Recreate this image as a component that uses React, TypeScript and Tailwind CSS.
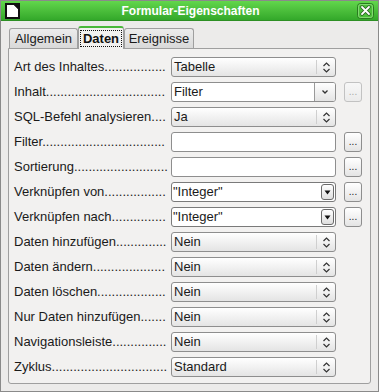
import React, { useMemo } from 'react';

const font = { fontFamily: '"Liberation Sans", Arial, sans-serif' };

type Kind = 'list' | 'combo' | 'text' | 'field';

const rows: { label: string; kind: Kind; value?: string; button?: 'on' | 'off' }[] = [
  { label: 'Art des Inhaltes', kind: 'list', value: 'Tabelle' },
  { label: 'Inhalt', kind: 'combo', value: 'Filter', button: 'off' },
  { label: 'SQL-Befehl analysieren', kind: 'list', value: 'Ja' },
  { label: 'Filter', kind: 'text', button: 'on' },
  { label: 'Sortierung', kind: 'text', button: 'on' },
  { label: 'Verknüpfen von', kind: 'field', value: '"Integer"', button: 'on' },
  { label: 'Verknüpfen nach', kind: 'field', value: '"Integer"', button: 'on' },
  { label: 'Daten hinzufügen', kind: 'list', value: 'Nein' },
  { label: 'Daten ändern', kind: 'list', value: 'Nein' },
  { label: 'Daten löschen', kind: 'list', value: 'Nein' },
  { label: 'Nur Daten hinzufügen', kind: 'list', value: 'Nein' },
  { label: 'Navigationsleiste', kind: 'list', value: 'Nein' },
  { label: 'Zyklus', kind: 'list', value: 'Standard' },
];

const LABEL_W = 154;

// label text padded with dots up to the control column
function useLeaders() {
  return useMemo(() => {
    const ctx = document.createElement('canvas').getContext('2d');
    if (!ctx) return rows.map((r) => r.label + '....');
    ctx.font = '13px "Liberation Sans", Arial, sans-serif';
    const dot = ctx.measureText('.').width;
    return rows.map((r) => {
      const w = ctx.measureText(r.label).width;
      const n = Math.max(0, Math.floor((LABEL_W - w) / dot));
      return r.label + '.'.repeat(n);
    });
  }, []);
}

function UpDown() {
  return (
    <svg width="9" height="13" viewBox="0 0 9 13" fill="none" stroke="#333" strokeWidth="1.2">
      <path d="M1.5 5 L4.5 2 L7.5 5" />
      <path d="M1.5 8 L4.5 11 L7.5 8" />
    </svg>
  );
}

function Control({ kind, value }: { kind: Kind; value?: string }) {
  if (kind === 'list') {
    return (
      <div className="w-[165px] h-[20px] rounded-[3px] border border-[#8e8e8e] bg-gradient-to-b from-white to-[#e4e4e4] flex items-center">
        <span className="flex-1 pl-[2px] text-[13px] text-[#1a1a1a] leading-[18px]">{value}</span>
        <div className="w-[19px] h-[14px] border-l border-[#cfcfcf] flex items-center justify-center">
          <UpDown />
        </div>
      </div>
    );
  }
  if (kind === 'combo') {
    return (
      <div className="w-[165px] h-[20px] rounded-[3px] border border-[#8e8e8e] bg-white flex items-stretch overflow-hidden">
        <span className="flex-1 pl-[2px] text-[13px] text-[#1a1a1a] leading-[18px]">{value}</span>
        <div className="w-[21px] border-l border-[#9a9a9a] bg-gradient-to-b from-white to-[#e4e4e4] flex items-center justify-center">
          <svg width="8" height="6" viewBox="0 0 8 6" fill="none" stroke="#333" strokeWidth="1.3">
            <path d="M1.5 1.5 L4 4 L6.5 1.5" />
          </svg>
        </div>
      </div>
    );
  }
  if (kind === 'field') {
    return (
      <div className="w-[165px] h-[20px] rounded-[3px] border border-[#7a7a7a] bg-white flex items-center pr-[1px]">
        <span className="flex-1 pl-[1px] text-[13px] text-[#1a1a1a] leading-[18px]">{value}</span>
        <div className="w-[13px] h-[16px] rounded-[3px] border border-[#6a6a6a] bg-gradient-to-b from-white to-[#dedede] flex items-center justify-center">
          <svg width="7" height="5" viewBox="0 0 7 5">
            <path d="M0.5 0.5 H6.5 L3.5 4.5 Z" fill="#111" />
          </svg>
        </div>
      </div>
    );
  }
  return <div className="w-[165px] h-[20px] rounded-[3px] border border-[#8e8e8e] bg-white" />;
}

function DotsButton({ enabled }: { enabled: boolean }) {
  return (
    <div
      className={
        enabled
          ? 'w-[18px] h-[20px] rounded-[3px] border border-[#8e8e8e] bg-gradient-to-b from-white to-[#e4e4e4] flex items-end justify-center pb-[4px] text-[10px] leading-[10px] text-[#222]'
          : 'w-[18px] h-[20px] rounded-[3px] border border-[#c2c2c2] bg-gradient-to-b from-[#f7f7f7] to-[#ebebeb] flex items-end justify-center pb-[4px] text-[10px] leading-[10px] text-[#a8a8a8]'
      }
    >
      ...
    </div>
  );
}

function DocIcon() {
  return (
    <svg width="15" height="16" viewBox="0 0 15 16">
      <rect x="0" y="0" width="15" height="16" fill="#111" />
      <path d="M2 2 H9 L13 6 V14 H2 Z" fill="#fff" />
      <path d="M9 2 L13 6 V2 Z" fill="#111" />
    </svg>
  );
}

function CloseIcon() {
  return (
    <svg width="17" height="16" viewBox="0 0 17 16">
      <rect x="0.5" y="0.5" width="16" height="15" rx="3" fill="#4cbf3a" stroke="#2a7a20" />
      <rect x="1.5" y="1.5" width="14" height="13" rx="2" fill="none" stroke="#8fe07d" strokeWidth="0.8" />
      <path d="M5 4 L12 11 M12 4 L5 11" stroke="#2b5f24" strokeWidth="3.4" strokeLinecap="round" />
      <path d="M5 4 L12 11 M12 4 L5 11" stroke="#fff" strokeWidth="1.8" strokeLinecap="round" />
    </svg>
  );
}

export default function App() {
  const leaders = useLeaders();

  return (
    <div
      className="w-[379px] h-[392px] bg-[#ecebea] border border-[#8a8a8a] flex flex-col overflow-hidden"
      style={font}
    >
      {/* Title bar */}
      <div className="h-[20px] bg-gradient-to-b from-[#62d64c] to-[#33a82a] border-b border-[#2d8f24] flex items-center px-[4px] shrink-0">
        <DocIcon />
        <div className="flex-1 text-center text-white font-bold text-[12px] leading-[16px] pl-[4px]">
          Formular-Eigenschaften
        </div>
        <CloseIcon />
      </div>

      {/* Tabs */}
      <div className="flex items-end pl-[8px] mt-[4px] h-[23px] shrink-0 relative z-10">
        <div className="w-[69px] h-[20px] rounded-t-[3px] border border-b-0 border-[#9f9f9f] bg-gradient-to-b from-[#ececec] to-[#d9d9d9] flex items-center justify-center text-[13px] text-[#1a1a1a]">
          Allgemein
        </div>
        <div className="w-[46px] h-[23px] rounded-t-[3px] border border-b-0 border-[#9f9f9f] border-t-2 border-t-[#49b83a] bg-[#f2f1f0] flex items-center justify-center -mb-[1px]">
          <span className="font-bold text-[13px] text-[#111] leading-[15px] px-[2px] outline-1 outline-dotted outline-[#111]">
            Daten
          </span>
        </div>
        <div className="w-[70px] h-[20px] rounded-t-[3px] border border-b-0 border-[#9f9f9f] bg-gradient-to-b from-[#ececec] to-[#d9d9d9] flex items-center justify-center text-[13px] text-[#1a1a1a]">
          Ereignisse
        </div>
      </div>

      {/* Panel */}
      <div className="mx-[7px] h-[336px] border border-[#9f9f9f] rounded-b-[3px] rounded-tr-[3px] bg-[#f2f1f0] pt-[8px] pl-[5px] flex flex-col gap-[5px]">
        {rows.map((r, i) => (
          <div key={r.label} className="flex items-center h-[20px]">
            <div className="w-[155px] mr-[2px] whitespace-nowrap text-[13px] text-[#1a1a1a] leading-[18px]">
              {leaders[i]}
            </div>
            <Control kind={r.kind} value={r.value} />
            {r.button && (
              <div className="ml-[8px]">
                <DotsButton enabled={r.button === 'on'} />
              </div>
            )}
          </div>
        ))}
      </div>
    </div>
  );
}
